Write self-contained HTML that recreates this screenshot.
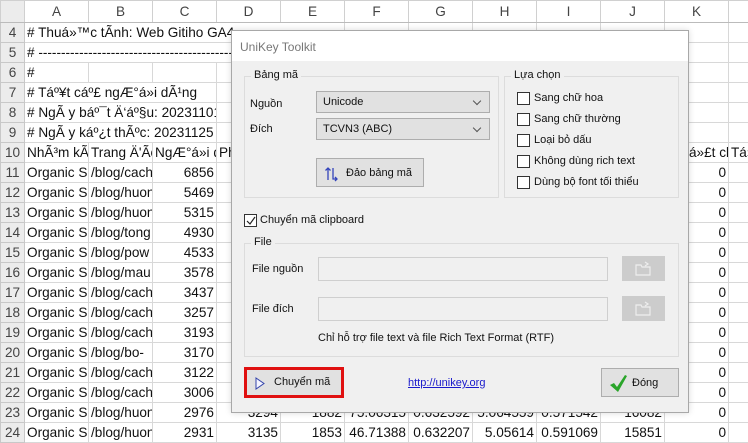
<!DOCTYPE html>
<html><head><meta charset="utf-8"><style>
*{box-sizing:border-box;margin:0;padding:0}
body{width:748px;height:442px;overflow:hidden;background:#fff;position:relative;font-family:"Liberation Sans",sans-serif}
table{position:absolute;left:0;top:0;width:768px;border-collapse:collapse;table-layout:fixed;font-size:13.6px;color:#111}
td{border:1px solid #d8d8d8;height:20px;white-space:nowrap;overflow:hidden;padding:0 2px;line-height:18px}
tr.h td{height:22px;text-align:center;color:#444;background:#fff;border-color:#d0d0d0;border-bottom:1px solid #bbb}
td.n{background:#ececec;text-align:center;color:#444;border-color:#c8c8c8;padding:0}
td.r{text-align:right}
#dlg{position:absolute;left:231px;top:30px;width:458px;height:383px;background:#f0f0f0;border:1px solid #a8a8a8;font-size:11px;color:#111;box-shadow:0 0 6px rgba(0,0,0,.15)}
#tb{position:absolute;left:0;top:0;width:100%;height:30px;background:#fff;color:#777;padding:9px 0 0 8px;font-size:12px}
.a{position:absolute}
.grp{position:absolute;border:1px solid #dcdcdc}
.gl{position:absolute;background:#f0f0f0;padding:0 3px;top:-8px;left:6px}
.sel{position:absolute;background:#e1e1e1;border:1px solid #adadad;height:22px;padding:4px 6px}
.sel:after{content:"";position:absolute;right:9px;top:6px;width:5px;height:5px;border-right:1px solid #555;border-bottom:1px solid #555;transform:rotate(45deg)}
.cb{position:absolute;width:13px;height:13px;border:1px solid #333;background:#fff}
.inp{position:absolute;background:#f0f0f0;border:1px solid #cfcfcf;height:24px}
.fb{position:absolute;background:#cccccc;width:43px;height:25px}
.btn{position:absolute;background:#e1e1e1;border:1px solid #adadad}
</style></head><body>
<table>
<colgroup><col style="width:24px"><col style="width:64px"><col style="width:64px"><col style="width:64px"><col style="width:64px"><col style="width:64px"><col style="width:64px"><col style="width:64px"><col style="width:64px"><col style="width:64px"><col style="width:64px"><col style="width:64px"><col style="width:40px"></colgroup>
<tr class="h"><td class="n" style="background:#ececec"></td><td>A</td><td>B</td><td>C</td><td>D</td><td>E</td><td>F</td><td>G</td><td>H</td><td>I</td><td>J</td><td>K</td><td></td></tr>
<tr><td class="n">4</td><td colspan="5">&#35; Thuá»™c tÃ­nh: Web Gitiho GA4</td><td></td><td></td><td></td><td></td><td></td><td></td><td></td></tr>
<tr><td class="n">5</td><td colspan="5"># -------------------------------------------------------</td><td></td><td></td><td></td><td></td><td></td><td></td><td></td></tr>
<tr><td class="n">6</td><td>#</td><td></td><td></td><td></td><td></td><td></td><td></td><td></td><td></td><td></td><td></td><td></td></tr>
<tr><td class="n">7</td><td colspan="3"># Táº¥t cáº£ ngÆ°á»i dÃ¹ng</td><td></td><td></td><td></td><td></td><td></td><td></td><td></td><td></td><td></td></tr>
<tr><td class="n">8</td><td colspan="3"># NgÃ y báº¯t Ä‘áº§u: 20231101</td><td></td><td></td><td></td><td></td><td></td><td></td><td></td><td></td><td></td></tr>
<tr><td class="n">9</td><td colspan="3"># NgÃ y káº¿t thÃºc: 20231125</td><td></td><td></td><td></td><td></td><td></td><td></td><td></td><td></td><td></td></tr>
<tr><td class="n">10</td><td>NhÃ³m kÃªnh</td><td>Trang Ä'Ãch</td><td>NgÆ°á»i dùng</td><td>Ph</td><td></td><td></td><td></td><td></td><td></td><td>Lượt xem</td><td><span style="padding-left:22px">á»£t cl</span></td><td>Tá»</td></tr>
<tr><td class="n">11</td><td>Organic Search</td><td>/blog/cach</td><td class="r">6856</td><td></td><td></td><td></td><td></td><td></td><td></td><td></td><td class="r">0</td><td></td></tr>
<tr><td class="n">12</td><td>Organic Search</td><td>/blog/huong</td><td class="r">5469</td><td></td><td></td><td></td><td></td><td></td><td></td><td></td><td class="r">0</td><td></td></tr>
<tr><td class="n">13</td><td>Organic Search</td><td>/blog/huong</td><td class="r">5315</td><td></td><td></td><td></td><td></td><td></td><td></td><td></td><td class="r">0</td><td></td></tr>
<tr><td class="n">14</td><td>Organic Search</td><td>/blog/tong</td><td class="r">4930</td><td></td><td></td><td></td><td></td><td></td><td></td><td></td><td class="r">0</td><td></td></tr>
<tr><td class="n">15</td><td>Organic Search</td><td>/blog/pow</td><td class="r">4533</td><td></td><td></td><td></td><td></td><td></td><td></td><td></td><td class="r">0</td><td></td></tr>
<tr><td class="n">16</td><td>Organic Search</td><td>/blog/mau</td><td class="r">3578</td><td></td><td></td><td></td><td></td><td></td><td></td><td></td><td class="r">0</td><td></td></tr>
<tr><td class="n">17</td><td>Organic Search</td><td>/blog/cach</td><td class="r">3437</td><td></td><td></td><td></td><td></td><td></td><td></td><td></td><td class="r">0</td><td></td></tr>
<tr><td class="n">18</td><td>Organic Search</td><td>/blog/cach</td><td class="r">3257</td><td></td><td></td><td></td><td></td><td></td><td></td><td></td><td class="r">0</td><td></td></tr>
<tr><td class="n">19</td><td>Organic Search</td><td>/blog/cach</td><td class="r">3193</td><td></td><td></td><td></td><td></td><td></td><td></td><td></td><td class="r">0</td><td></td></tr>
<tr><td class="n">20</td><td>Organic Search</td><td>/blog/bo-</td><td class="r">3170</td><td></td><td></td><td></td><td></td><td></td><td></td><td></td><td class="r">0</td><td></td></tr>
<tr><td class="n">21</td><td>Organic Search</td><td>/blog/cach</td><td class="r">3122</td><td></td><td></td><td></td><td></td><td></td><td></td><td></td><td class="r">0</td><td></td></tr>
<tr><td class="n">22</td><td>Organic Search</td><td>/blog/cach</td><td class="r">3006</td><td></td><td></td><td></td><td></td><td></td><td></td><td></td><td class="r">0</td><td></td></tr>
<tr><td class="n">23</td><td>Organic Search</td><td>/blog/huong</td><td class="r">2976</td><td class="r">3294</td><td class="r">1882</td><td class="r">75.06315</td><td class="r">0.632592</td><td class="r">5.064559</td><td class="r">0.571542</td><td class="r">16082</td><td class="r">0</td><td></td></tr>
<tr><td class="n">24</td><td>Organic Search</td><td>/blog/huong</td><td class="r">2931</td><td class="r">3135</td><td class="r">1853</td><td class="r">46.71388</td><td class="r">0.632207</td><td class="r">5.05614</td><td class="r">0.591069</td><td class="r">15851</td><td class="r">0</td><td></td></tr>
</table>

<div id="dlg">
<div id="tb">UniKey Toolkit</div>
<div class="grp" style="left:12px;top:45px;width:255px;height:122px"><span class="gl">Bảng mã</span></div>
<div class="a" style="left:18px;top:67px">Nguồn</div>
<div class="a" style="left:18px;top:92px">Đích</div>
<div class="sel" style="left:84px;top:60px;width:174px">Unicode</div>
<div class="sel" style="left:84px;top:87px;width:174px">TCVN3 (ABC)</div>
<div class="btn" style="left:84px;top:127px;width:108px;height:29px"><svg class="a" style="left:7px;top:7px" width="16" height="16" viewBox="0 0 16 16" fill="none" stroke="#3344bb" stroke-width="1.3"><path d="M4 14V2M1.5 4.5L4 2l2.5 2.5"/><path d="M9 2v11h4M11 11l2 2-2 2"/></svg><span class="a" style="left:29px;top:8px">Đảo bảng mã</span></div>
<div class="grp" style="left:272px;top:45px;width:175px;height:122px"><span class="gl">Lựa chọn</span></div>
<div class="cb" style="left:285px;top:61px"></div><div class="a" style="left:302px;top:61px">Sang chữ hoa</div>
<div class="cb" style="left:285px;top:82px"></div><div class="a" style="left:302px;top:82px">Sang chữ thường</div>
<div class="cb" style="left:285px;top:103px"></div><div class="a" style="left:302px;top:103px">Loại bỏ dấu</div>
<div class="cb" style="left:285px;top:124px"></div><div class="a" style="left:302px;top:124px">Không dùng rich text</div>
<div class="cb" style="left:285px;top:145px"></div><div class="a" style="left:302px;top:145px">Dùng bộ font tối thiểu</div>
<div class="cb" style="left:12px;top:183px"><svg class="a" style="left:1px;top:1px" width="10" height="10" viewBox="0 0 10 10"><path d="M1 5l3 3 5-7" fill="none" stroke="#222" stroke-width="1.2"/></svg></div>
<div class="a" style="left:28px;top:183px">Chuyển mã clipboard</div>
<div class="grp" style="left:12px;top:212px;width:435px;height:114px"><span class="gl">File</span></div>
<div class="a" style="left:20px;top:232px">File nguồn</div>
<div class="a" style="left:20px;top:272px">File đích</div>
<div class="inp" style="left:86px;top:226px;width:290px"></div>
<div class="inp" style="left:86px;top:266px;width:290px"></div>
<div class="fb" style="left:390px;top:225px"><svg class="a" style="left:13px;top:5px" width="18" height="15" viewBox="0 0 18 15" fill="none" stroke="#eee" stroke-width="1.2"><path d="M1 4h5l1 2h8v8H1z"/><path d="M10 1l3 2-3 2"/></svg></div>
<div class="fb" style="left:390px;top:265px"><svg class="a" style="left:13px;top:5px" width="18" height="15" viewBox="0 0 18 15" fill="none" stroke="#eee" stroke-width="1.2"><path d="M1 4h5l1 2h8v8H1z"/><path d="M10 1l3 2-3 2"/></svg></div>
<div class="a" style="left:86px;top:301px">Chỉ hỗ trợ file text và file Rich Text Format (RTF)</div>
<div class="btn" style="left:12px;top:336px;width:100px;height:31px;border:3px solid #e01010"><svg class="a" style="left:8px;top:7px" width="10" height="13" viewBox="0 0 10 13"><path d="M1 1l8 5.5L1 12z" fill="#f4f4ff" stroke="#3344aa"/></svg><span class="a" style="left:27px;top:6px">Chuyển mã</span></div>
<div class="a" style="left:176px;top:346px;color:#1a1acc;text-decoration:underline">http://unikey.org</div>
<div class="btn" style="left:369px;top:337px;width:78px;height:29px"><svg class="a" style="left:6px;top:5px" width="20" height="20" viewBox="0 0 20 20"><path d="M2 11l4-2 3 4 8-12 2 1-9 16z" fill="#2aa52a"/></svg><span class="a" style="left:30px;top:8px">Đóng</span></div>
</div>
</body></html>
